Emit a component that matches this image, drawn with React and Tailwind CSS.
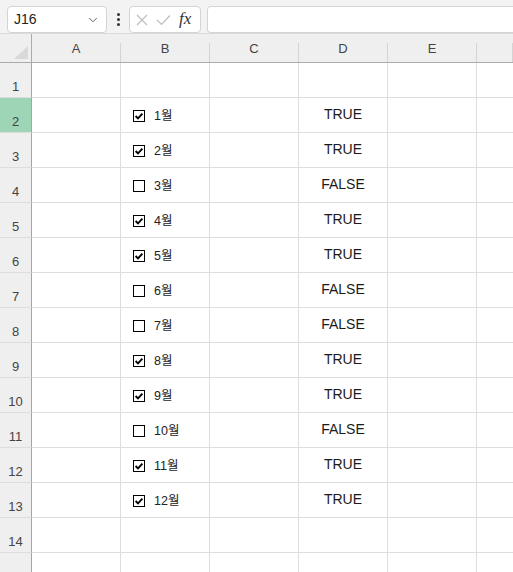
import React from "react";
import { ChevronDown } from "lucide-react";

const rows = [
  null,
  { m: "1월", v: true },
  { m: "2월", v: true },
  { m: "3월", v: false },
  { m: "4월", v: true },
  { m: "5월", v: true },
  { m: "6월", v: false },
  { m: "7월", v: false },
  { m: "8월", v: true },
  { m: "9월", v: true },
  { m: "10월", v: false },
  { m: "11월", v: true },
  { m: "12월", v: true },
  null,
  null,
];

const cols = ["A", "B", "C", "D", "E", ""];

const CheckBox = ({ checked }) => (
  <div className="w-[12px] h-[12px] border border-black flex items-center justify-center bg-white">
    {checked && (
      <svg width="10" height="10" viewBox="0 0 10 10">
        <path d="M1.6 5 L4 7.4 L8.4 2.6" fill="none" stroke="#000" strokeWidth="1.9" />
      </svg>
    )}
  </div>
);

const Toolbar = () => (
  <div className="h-[34px] bg-[#f3f3f3] border-b border-[#dadada] flex items-start pt-[6px] pl-[7px]">
    <div className="w-[100px] h-[27px] bg-white border border-[#d4d4d4] rounded-[4px] flex items-center justify-between pl-[6px] pr-[6px]">
      <span className="text-[14px] text-[#222]">J16</span>
      <ChevronDown size={14} strokeWidth={1.6} color="#555" />
    </div>
    <div className="w-[22px] h-[27px] flex flex-col items-center justify-center gap-[2px]">
      <span className="w-[3px] h-[3px] rounded-full bg-[#333]" />
      <span className="w-[3px] h-[3px] rounded-full bg-[#333]" />
      <span className="w-[3px] h-[3px] rounded-full bg-[#333]" />
    </div>
    <div className="w-[72px] h-[27px] bg-white border border-[#d4d4d4] rounded-[4px] flex items-center pl-[6px] gap-[8px]">
      <svg width="12" height="12" viewBox="0 0 12 12">
        <path d="M1 1 L11 11 M11 1 L1 11" stroke="#bdbdbd" strokeWidth="1.2" fill="none" />
      </svg>
      <svg width="15" height="12" viewBox="0 0 15 12">
        <path d="M1 6 L5.5 10.5 L14 1.5" stroke="#bdbdbd" strokeWidth="1.2" fill="none" />
      </svg>
      <span className="text-[17px] italic text-[#333] font-['Liberation_Serif',serif] -mt-[2px]">fx</span>
    </div>
    <div className="ml-[6px] flex-1 h-[27px] bg-white border border-[#d4d4d4] border-r-0 rounded-l-[4px]" />
  </div>
);

export default function App() {
  return (
    <div className="w-[513px] h-[572px] overflow-hidden bg-white font-['Liberation_Sans','Noto_Sans_CJK_KR',sans-serif]">
      <Toolbar />
      <div className="grid grid-cols-[32px_repeat(5,89px)_1fr]">
        <div className="h-[29px] bg-[#efefef] border-r border-b border-[#ababab] flex items-end justify-end pr-[3px] pb-[3px]">
          <svg width="14" height="13" viewBox="0 0 14 13">
            <path d="M14 0 L14 13 L0 13 Z" fill="#d9d9d9" />
          </svg>
        </div>
        {cols.map((c, i) => (
          <div key={i} className="h-[29px] bg-[#efefef] border-b border-[#ababab] flex">
            <div className="flex-1 flex items-center justify-center pt-[2px] text-[13px] text-[#444]">{c}</div>
            <div className="self-end w-px h-[19px] bg-[#d4d4d4]" />
          </div>
        ))}
        {rows.map((r, i) => (
          <React.Fragment key={i}>
            <div
              className={`h-[35px] border-r border-r-[#a6a6a6] border-b border-b-[#dcdcdc] flex items-end justify-center pb-[1px] text-[13px] text-[#444] ${
                i === 1 ? "bg-[#9fd5b7]" : "bg-[#efefef]"
              }`}
            >
              {i < 14 ? i + 1 : ""}
            </div>
            <div className="h-[35px] border-r border-b border-[#dedede]" />
            <div className="h-[35px] border-r border-b border-[#dedede] flex items-center pl-[12px] pt-[2px]">
              {r && (
                <>
                  <CheckBox checked={r.v} />
                  <span className="ml-[9px] text-[12.5px] text-[#222]">{r.m}</span>
                </>
              )}
            </div>
            <div className="h-[35px] border-r border-b border-[#dedede]" />
            <div className="h-[35px] border-r border-b border-[#dedede] flex items-center justify-center pb-[2px] text-[14px] text-[#1a1a1a]">
              {r ? (r.v ? "TRUE" : "FALSE") : ""}
            </div>
            <div className="h-[35px] border-r border-b border-[#dedede]" />
            <div className="h-[35px] border-b border-[#dedede]" />
          </React.Fragment>
        ))}
      </div>
    </div>
  );
}
